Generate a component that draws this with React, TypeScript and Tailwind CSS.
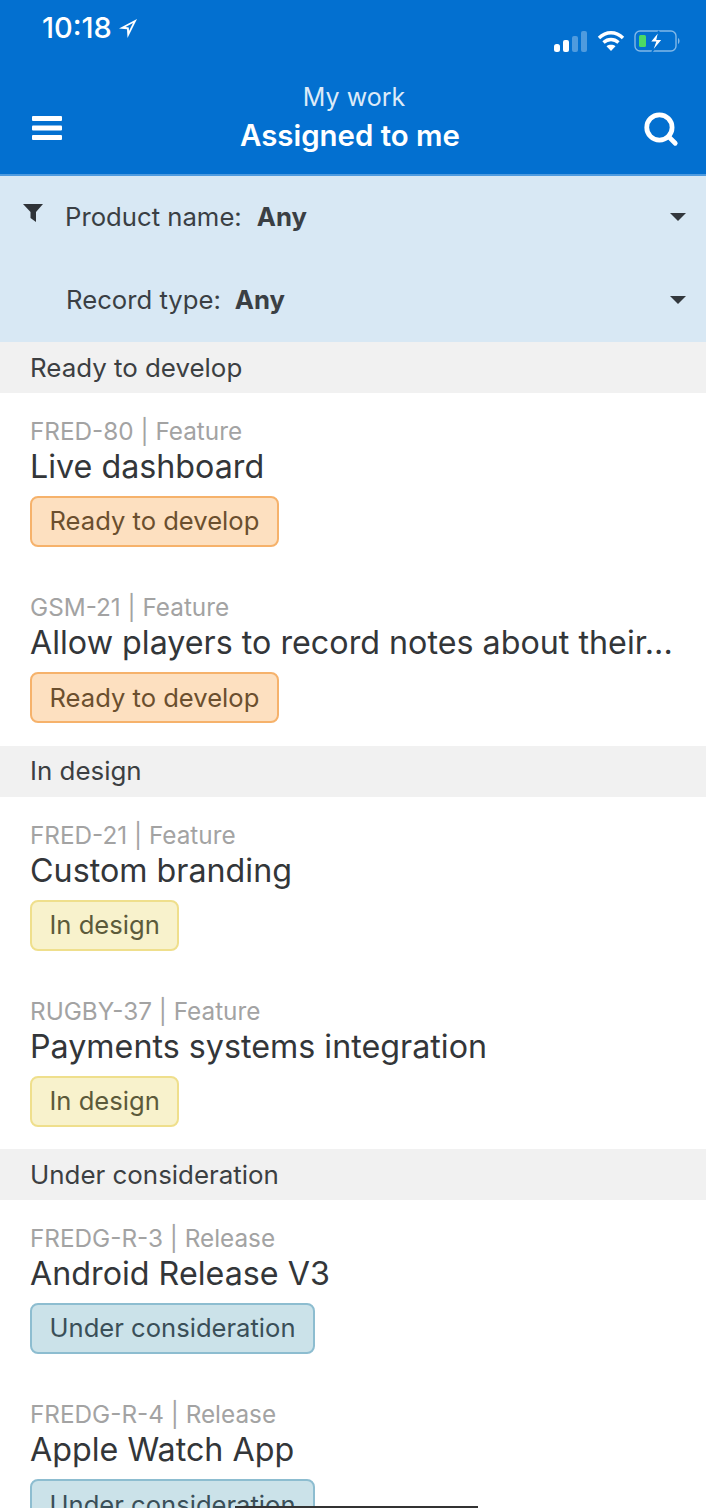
import React from 'react';
import { Search } from 'lucide-react';

type Status = 'ready' | 'design' | 'consideration';

const badgeStyles: Record<Status, string> = {
  ready: 'bg-[#fde0c0] border-[#f6b26b] text-[#6b4f2e]',
  design: 'bg-[#f8f2cc] border-[#efdf8c] text-[#5c5a3a]',
  consideration: 'bg-[#cbe2e9] border-[#8dbdd0] text-[#3a4f58]',
};

const sections: { title: string; status: Status; items: { meta: string; name: string }[] }[] = [
  {
    title: 'Ready to develop',
    status: 'ready',
    items: [
      { meta: 'FRED-80 | Feature', name: 'Live dashboard' },
      { meta: 'GSM-21 | Feature', name: 'Allow players to record notes about their...' },
    ],
  },
  {
    title: 'In design',
    status: 'design',
    items: [
      { meta: 'FRED-21 | Feature', name: 'Custom branding' },
      { meta: 'RUGBY-37 | Feature', name: 'Payments systems integration' },
    ],
  },
  {
    title: 'Under consideration',
    status: 'consideration',
    items: [
      { meta: 'FREDG-R-3 | Release', name: 'Android Release V3' },
      { meta: 'FREDG-R-4 | Release', name: 'Apple Watch App' },
    ],
  },
];

function StatusIcons() {
  return (
    <div className="flex items-center gap-[9px]">
      <svg width="34" height="22" viewBox="0 0 34 22">
        <rect x="0" y="14" width="6" height="8" rx="2.5" fill="#fff" />
        <rect x="9" y="10" width="6" height="12" rx="2" fill="#fff" />
        <rect x="18" y="6" width="6" height="16" rx="2" fill="#fff" fillOpacity="0.3" />
        <rect x="27" y="1" width="6" height="21" rx="2" fill="#fff" fillOpacity="0.3" />
      </svg>
      <svg width="28" height="22" viewBox="0 0 28 22" fill="none" stroke="#fff" strokeWidth="3.4">
        <path d="M2 8 C9 1 19 1 26 8" />
        <path d="M6.5 12.5 C11 8.5 17 8.5 21.5 12.5" />
        <path d="M14 21 L9.5 16.2 C12 14.4 16 14.4 18.5 16.2 Z" fill="#fff" stroke="none" />
      </svg>
      <svg width="47" height="22" viewBox="0 0 47 22" fill="none">
        <rect x="1" y="1" width="41" height="20" rx="5" stroke="#fff" strokeOpacity="0.5" strokeWidth="1.4" />
        <rect x="5" y="5" width="7" height="12" rx="1.5" fill="#4cd964" />
        <path d="M44 8 C46 9 46 13 44 14 Z" fill="#fff" fillOpacity="0.5" />
        <path d="M25 1 L16 12 H21.5 L18 22 L28.5 9.5 H23 Z" fill="#fff" stroke="#0370d0" strokeWidth="1.2" />
      </svg>
    </div>
  );
}

function Header() {
  return (
    <header className="h-[176px] bg-[#0370d0] border-b-2 border-[#4f9bdf] text-white flex flex-col">
      <div className="flex justify-between pl-[42px] pr-[25px] h-[72px]">
        <div className="flex items-start gap-[6px] pt-[11px]">
          <span className="text-[29px] leading-[34px] font-medium">10:18</span>
          <svg className="mt-[7px]" width="20" height="21" viewBox="0 0 20 21" fill="#fff">
            <path d="M19 1 L1 10.5 L9 11.2 L9.5 20 Z M15 5 L7.5 9 L10.8 9.4 L11 13 Z" fillRule="evenodd" />
          </svg>
        </div>
        <div className="pt-[30px]">
          <StatusIcons />
        </div>
      </div>
      <div className="flex items-start justify-between pl-[32px] pr-[26px]">
        <svg className="mt-[44px]" width="30" height="24" viewBox="0 0 30 24" fill="#fff">
          <rect x="0" y="0" width="30" height="5" rx="1" />
          <rect x="0" y="9.5" width="30" height="5" rx="1" />
          <rect x="0" y="19" width="30" height="5" rx="1" />
        </svg>
        <div className="text-center mt-[8px] -ml-[4px]">
          <div className="text-[25px] leading-[34px] text-[#dceaf8] ml-[8px]">My work</div>
          <div className="text-[29.4px] leading-[42px] font-semibold mt-[1px]">Assigned to me</div>
        </div>
        <Search className="mt-[38px] w-[38px] h-[38px]" strokeWidth={3} />
      </div>
    </header>
  );
}

function Filters() {
  return (
    <div className="h-[166px] bg-[#d8e8f4] text-[#3a3f44] text-[25.7px] pt-[23px]">
      <div className="flex items-center justify-between pl-[22px] pr-[20px] h-[36px]">
        <div className="flex items-center">
          <svg className="-mt-[8px]" width="22" height="22" viewBox="0 0 22 22" fill="#2f3338">
            <path d="M1 2 H21 L14 10 V20 L8.5 16 V10 Z" />
          </svg>
          <span className="ml-[21px]">Product name:</span>
          <span className="ml-[15px] font-bold">Any</span>
        </div>
        <span className="border-x-[8px] border-x-transparent border-t-[8px] border-t-[#33383d]" />
      </div>
      <div className="flex items-center justify-between pl-[66px] pr-[20px] h-[36px] mt-[47px]">
        <div className="flex items-center">
          <span>Record type:</span>
          <span className="ml-[14px] font-bold">Any</span>
        </div>
        <span className="border-x-[8px] border-x-transparent border-t-[8px] border-t-[#33383d]" />
      </div>
    </div>
  );
}

function WorkItem({ meta, name, status, label }: { meta: string; name: string; status: Status; label: string }) {
  return (
    <div className="h-[176.25px] pt-[23px]">
      <div className="text-[24.3px] leading-[30px] text-[#a3a3a3]">{meta}</div>
      <div className="text-[32.25px] leading-[40px] text-[#333639] mt-[1px] whitespace-nowrap">{name}</div>
      <div className={`inline-flex items-center h-[51px] mt-[9px] px-[17.5px] rounded-[8px] border-2 text-[25.6px] ${badgeStyles[status]}`}>
        {label}
      </div>
    </div>
  );
}

export default function App() {
  return (
    <div className="relative w-[706px] h-[1508px] overflow-hidden bg-white font-['Inter','Liberation_Sans',sans-serif]">
      <Header />
      <Filters />
      {sections.map(section => (
        <section key={section.title}>
          <div className="h-[51px] bg-[#f1f1f1] flex items-center pt-[1px] px-[30px] text-[25.9px] text-[#3c3f42]">{section.title}</div>
          <div className="px-[30px]">
            {section.items.map(item => (
              <WorkItem key={item.meta} meta={item.meta} name={item.name} status={section.status} label={section.title} />
            ))}
          </div>
        </section>
      ))}
      <div className="absolute left-[235px] bottom-0 w-[243px] h-[2px] bg-[#333]" />
    </div>
  );
}
